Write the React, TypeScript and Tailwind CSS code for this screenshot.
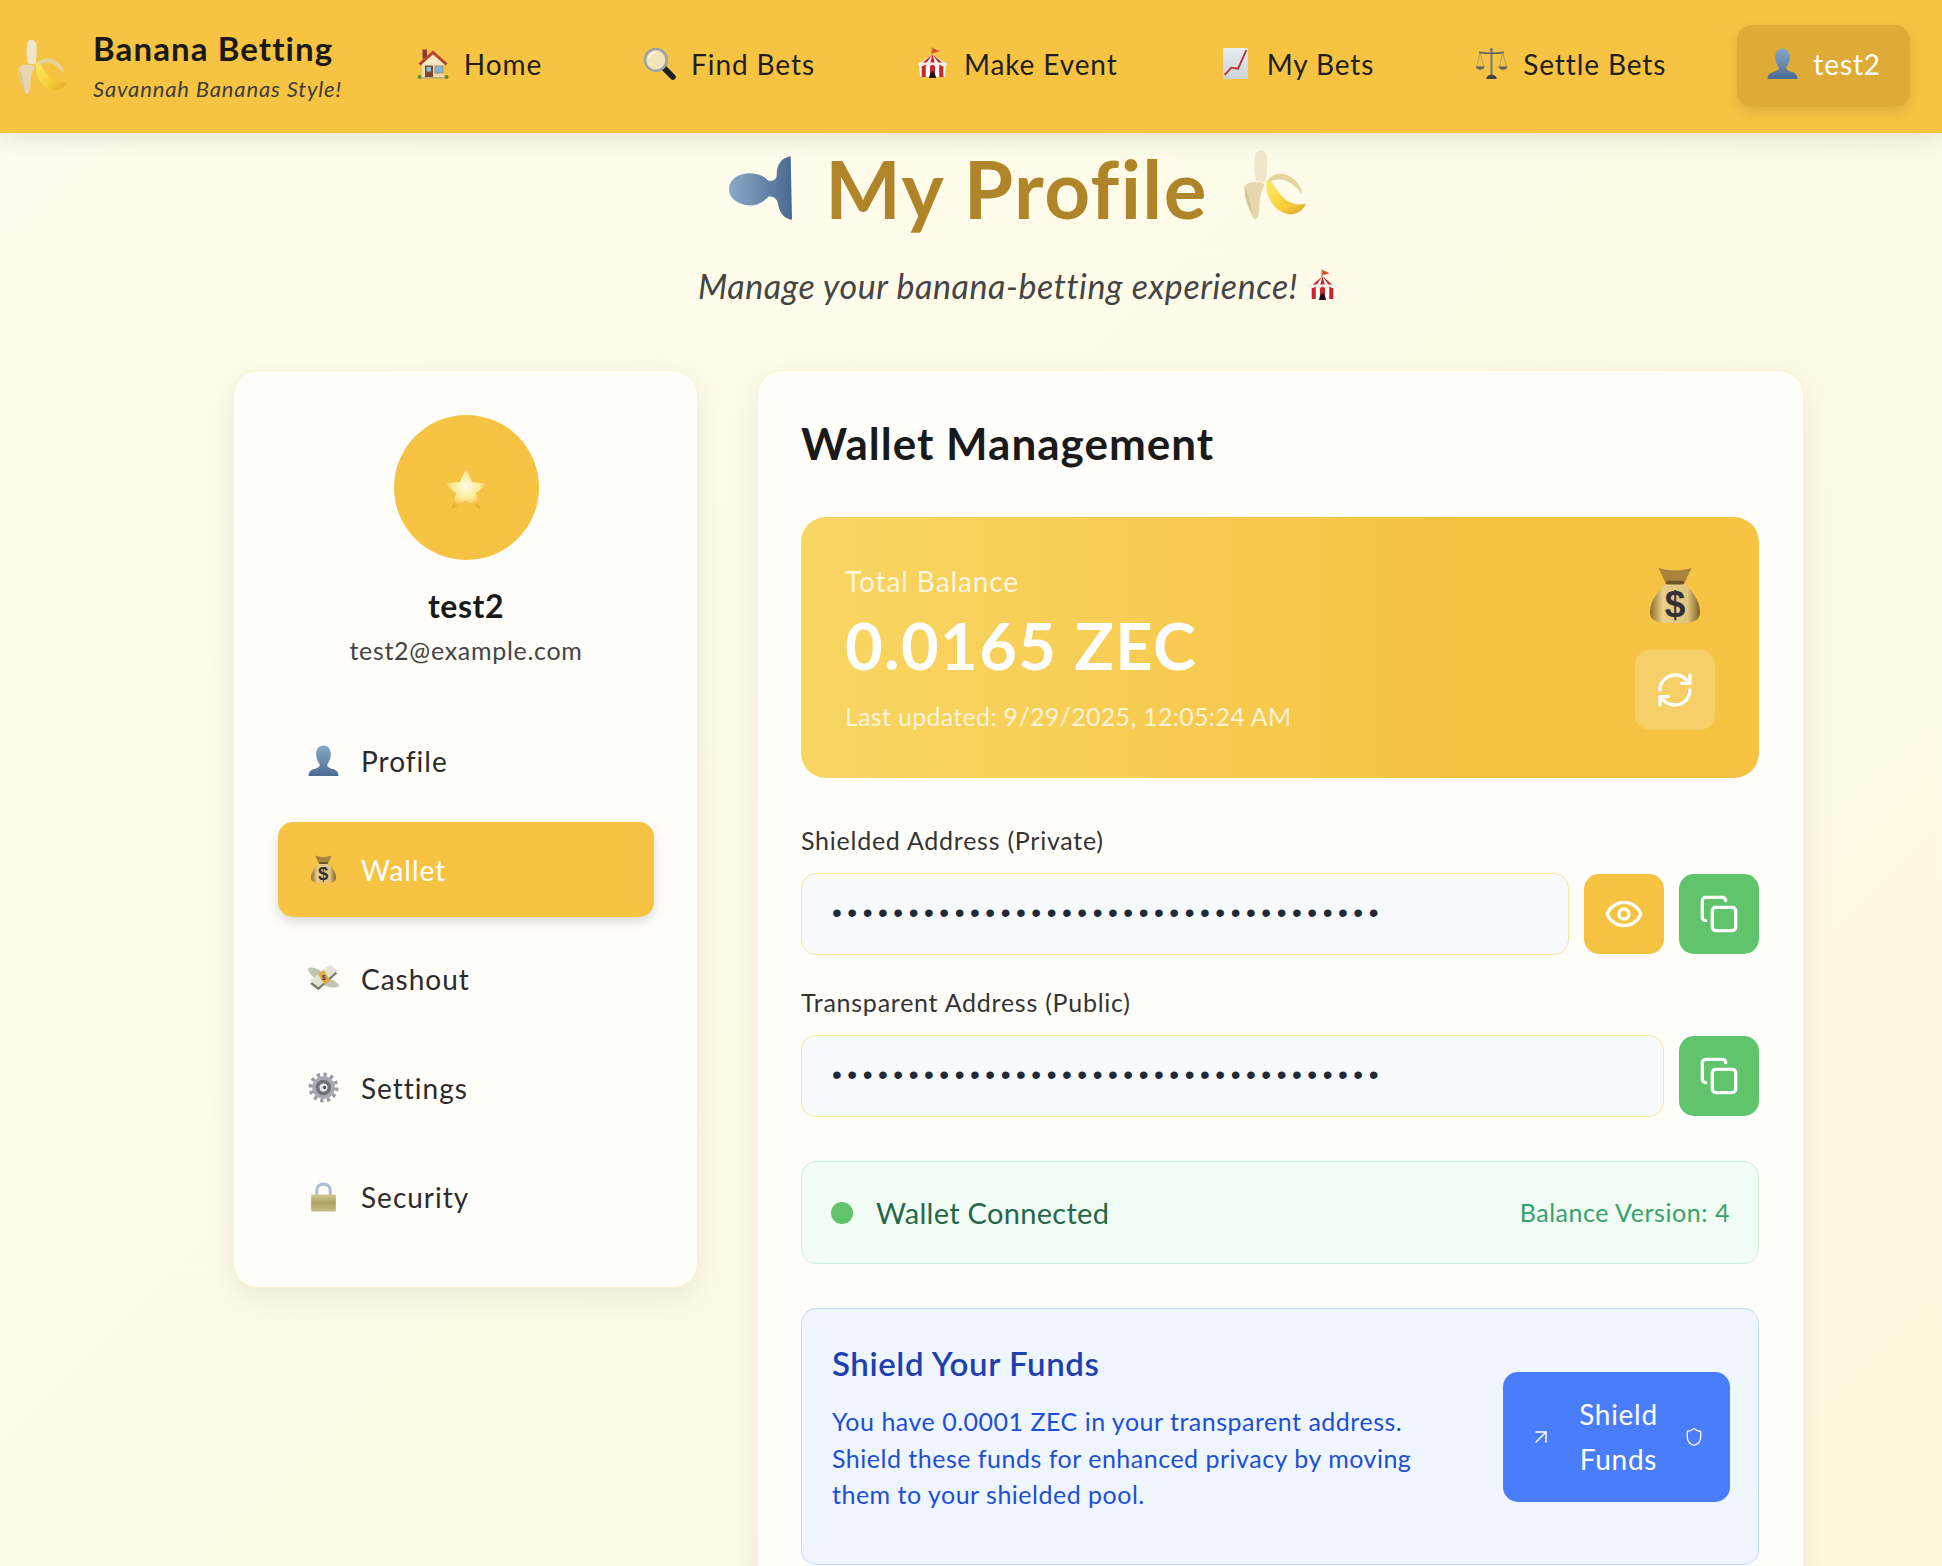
import { ArrowUpRight, Copy, Eye, RefreshCw, Shield } from "lucide-react";

type IconProps = { className?: string };

function BananaIcon({ className }: IconProps) {
  return (
    <svg viewBox="20 20 155 180" className={className}>
      <defs>
        <linearGradient id="bananaFruit" x1="0" y1="0" x2="1" y2="1">
          <stop offset="0" stopColor="#fdea6a" />
          <stop offset="0.6" stopColor="#f7cf38" />
          <stop offset="1" stopColor="#dda62a" />
        </linearGradient>
      </defs>
      <path d="M80 98 C72 130 95 175 135 178 C150 178 165 168 170 153 C150 160 125 150 110 130 C100 118 92 105 88 95 Z" fill="url(#bananaFruit)" />
      <path d="M85 95 C105 75 135 85 150 105 C158 115 162 125 162 132 C150 115 130 98 112 97 C100 96 92 100 85 105 Z" fill="#e6d4a0" />
      <path d="M52 45 C52 30 70 25 78 38 C84 55 78 85 78 103 L55 100 C50 80 50 60 52 45 Z" fill="#efe6cd" />
      <path d="M28 112 C40 100 60 100 75 108 C65 125 62 150 62 170 C60 190 50 195 45 180 C35 160 26 135 28 112 Z" fill="#e6d7ae" />
      <path d="M30 114 C38 135 42 160 48 180 C36 160 27 135 30 114 Z" fill="#cdbb86" opacity="0.6" />
    </svg>
  );
}

function HouseIcon({ className }: IconProps) {
  return (
    <svg viewBox="0 0 64 64" className={className}>
      <rect x="11" y="3" width="9" height="18" fill="#8c3b2e" />
      <path d="M10 27 H54 V58 H10 Z" fill="#f0dcae" />
      <path d="M3 31 L32 5 L61 31 L57 35 L32 13 L7 35 Z" fill="#b73f35" />
      <path d="M32 13 L52 31 V36 H12 V31 Z" fill="#f6e7c2" />
      <rect x="16" y="35" width="16" height="24" fill="#7b4a35" />
      <rect x="19" y="38" width="9" height="9" fill="#8ec0e4" />
      <rect x="36" y="36" width="16" height="14" fill="#7fb7e2" stroke="#a48a62" strokeWidth="2" />
      <circle cx="5" cy="58" r="4" fill="#5c8f3a" />
      <circle cx="59" cy="58" r="4" fill="#5c8f3a" />
      <rect x="8" y="58" width="48" height="3" fill="#b8a98a" />
    </svg>
  );
}

function MagnifierIcon({ className }: IconProps) {
  return (
    <svg viewBox="0 0 64 64" className={className}>
      <path d="M40 40 L58 58" stroke="#1c2026" strokeWidth="11" strokeLinecap="round" />
      <circle cx="25" cy="25" r="21" fill="#f5e5b8" stroke="#9da3a8" strokeWidth="5" />
      <path d="M11 22 C13 14 19 10 26 10" stroke="#fff" strokeWidth="3" fill="none" opacity="0.7" />
    </svg>
  );
}

function TentIcon({ className }: IconProps) {
  return (
    <svg viewBox="0 0 64 64" className={className}>
      <path d="M31 1 V16" stroke="#8a9a4a" strokeWidth="2.5" />
      <path d="M32 2 L46 8 L32 12 Z" fill="#e2482f" />
      <path d="M32 14 L58 32 L56 58 H8 L6 32 Z" fill="#fff" />
      <path d="M32 14 L19 33 V58 H11 V32 Z" fill="#c8272b" />
      <path d="M32 14 L45 33 V58 H53 V32 Z" fill="#c8272b" />
      <path d="M32 14 L27 33 V58 H37 V33 Z" fill="#c8272b" />
      <path d="M3 34 C10 38 14 38 18 34 C23 38 27 38 32 34 C37 38 41 38 46 34 C50 38 55 38 61 34 L58 30 H6 Z" fill="#f3eee6" />
      <path d="M25 60 C27 52 29 48 32 46 C35 48 37 52 39 60 Z" fill="#1c1412" />
    </svg>
  );
}

function ChartIcon({ className }: IconProps) {
  return (
    <svg viewBox="0 0 64 64" className={className}>
      <defs>
        <linearGradient id="chartBg" x1="0" y1="0" x2="0" y2="1">
          <stop offset="0" stopColor="#e8ecf1" />
          <stop offset="1" stopColor="#cdd3da" />
        </linearGradient>
      </defs>
      <rect x="8" y="2" width="48" height="60" fill="url(#chartBg)" />
      <path d="M11 54 L24 40 L37 42 L53 6" stroke="#b3322b" strokeWidth="3.5" fill="none" />
    </svg>
  );
}

function ScalesIcon({ className }: IconProps) {
  return (
    <svg viewBox="0 0 64 64" className={className}>
      <circle cx="32" cy="5" r="3" fill="#73787f" />
      <path d="M32 6 V56" stroke="#73787f" strokeWidth="4" />
      <path d="M8 10 C20 13 44 13 56 10" stroke="#5c6168" strokeWidth="3" fill="none" />
      <path d="M10 11 L3 38 M10 11 L17 38 M54 11 L47 38 M54 11 L61 38" stroke="#7f858c" strokeWidth="1.2" />
      <path d="M1 38 H19 C18 46 3 46 1 38 Z" fill="#5c6168" />
      <path d="M45 38 H63 C62 46 47 46 45 38 Z" fill="#5c6168" />
      <path d="M22 62 C22 56 28 54 32 54 C36 54 42 56 42 62 Z" fill="#3f444a" />
    </svg>
  );
}

function BustIcon({ className }: IconProps) {
  return (
    <svg viewBox="0 0 64 64" className={className}>
      <defs>
        <linearGradient id="bustFill" x1="0" y1="0" x2="0" y2="1">
          <stop offset="0" stopColor="#86a8c8" />
          <stop offset="1" stopColor="#4c6b92" />
        </linearGradient>
      </defs>
      <path
        d="M32 3 C43 3 47 13 46 23 C45 31 42 36 39 40 C40 46 46 47 52 49 C58 51 61 55 61 62 H3 C3 55 6 51 12 49 C18 47 24 46 25 40 C22 36 19 31 18 23 C17 13 21 3 32 3 Z"
        fill="url(#bustFill)"
      />
    </svg>
  );
}

function BustSideIcon({ className }: IconProps) {
  return (
    <svg viewBox="36 46 190 192" className={className}>
      <defs>
        <linearGradient id="bustSide" x1="0" y1="0" x2="1" y2="0">
          <stop offset="0" stopColor="#8aa9c9" />
          <stop offset="1" stopColor="#4a6990" />
        </linearGradient>
      </defs>
      <path
        d="M222 46 C195 50 180 70 180 100 C180 118 170 122 155 120 C140 102 110 95 90 98 C60 100 36 118 36 145 C36 172 60 192 100 195 C125 195 145 180 155 168 C172 166 182 175 185 195 C190 222 205 235 226 238 Z"
        fill="url(#bustSide)"
      />
    </svg>
  );
}

function StarIcon({ className }: IconProps) {
  return (
    <svg viewBox="0 0 64 64" className={className}>
      <defs>
        <radialGradient id="starFill" cx="0.5" cy="0.45" r="0.55">
          <stop offset="0" stopColor="#fffde8" />
          <stop offset="0.55" stopColor="#fdeb94" />
          <stop offset="1" stopColor="#eda92e" />
        </radialGradient>
      </defs>
      <path d="M32 5 L40 24 L62 26 L45 39 L51 60 L32 49 L13 60 L19 39 L2 26 L24 24 Z" fill="url(#starFill)" />
    </svg>
  );
}

function BagIcon({ className }: IconProps) {
  return (
    <svg viewBox="5 2 54 60" className={className}>
      <defs>
        <linearGradient id="bagFill" x1="0" y1="0" x2="1" y2="0">
          <stop offset="0" stopColor="#8f6c2c" />
          <stop offset="0.25" stopColor="#e8cf8c" />
          <stop offset="0.75" stopColor="#e2c47c" />
          <stop offset="1" stopColor="#7d5f26" />
        </linearGradient>
      </defs>
      <path d="M14 2 C24 6 40 6 50 2 L42 19 H22 Z" fill="#a8843f" />
      <path d="M24 18 C14 26 5 38 5 50 C5 59 12 62 32 62 C52 62 59 59 59 50 C59 38 50 26 41 18 Z" fill="url(#bagFill)" />
      <rect x="22" y="16" width="20" height="4" rx="2" fill="#6e5424" />
      <text x="32" y="55" textAnchor="middle" fontSize="40" fontWeight="700" fill="#33303a" fontFamily="'Liberation Sans', sans-serif">
        $
      </text>
    </svg>
  );
}

function MoneyWingsIcon({ className }: IconProps) {
  return (
    <svg viewBox="0 0 64 64" className={className}>
      <path d="M1 13 C10 8 22 12 30 22 L16 32 C9 28 5 21 1 13 Z" fill="#bfc5b2" />
      <path d="M36 34 C44 30 56 36 63 46 C54 52 42 50 32 44 Z" fill="#bfc5b2" />
      <path d="M6 42 L44 12 L59 22 L22 55 Z" fill="#75816a" />
      <path d="M6 36 L44 6 L59 16 L22 49 Z" fill="#dfe5d2" />
      <path d="M21 24 L32 15 L45 36 L34 43 Z" fill="#e3a93a" />
      <text x="33" y="35" textAnchor="middle" fontSize="14" fontWeight="700" fill="#444" fontFamily="'Liberation Sans', sans-serif">
        $
      </text>
    </svg>
  );
}

function GearIcon({ className }: IconProps) {
  return (
    <svg viewBox="0 0 64 64" className={className}>
      <circle cx="32" cy="32" r="24" fill="none" stroke="#9a9ba2" strokeWidth="10" strokeDasharray="6 6.5" />
      <circle cx="32" cy="32" r="22" fill="#a7a8b0" />
      <circle cx="32" cy="32" r="15" fill="#6f7079" />
      <circle cx="32" cy="32" r="8" fill="#e5e6e9" />
      <circle cx="34" cy="32" r="3.5" fill="#55565e" />
    </svg>
  );
}

function LockIcon({ className }: IconProps) {
  return (
    <svg viewBox="0 0 64 64" className={className}>
      <defs>
        <linearGradient id="lockBody" x1="0" y1="0" x2="0" y2="1">
          <stop offset="0" stopColor="#d2ca92" />
          <stop offset="0.5" stopColor="#aca062" />
          <stop offset="1" stopColor="#c8bf84" />
        </linearGradient>
      </defs>
      <path d="M19 30 V20 C19 4 45 4 45 20 V30" stroke="#a9bdd4" strokeWidth="6" fill="none" />
      <rect x="8" y="28" width="48" height="33" rx="2" fill="url(#lockBody)" />
    </svg>
  );
}

function NavLink({ icon, label }: { icon: React.ReactNode; label: string }) {
  return (
    <a className="flex items-center gap-[15px] px-[30px] pb-[5px] text-[28px] tracking-[0.9px] text-[#1f1f1f]">
      {icon}
      <span>{label}</span>
    </a>
  );
}

const menuIcon = "h-[33px] w-[33px] shrink-0";

function MenuItem({ icon, label, active }: { icon: React.ReactNode; label: string; active?: boolean }) {
  return (
    <div
      className={
        active
          ? "flex h-[95px] items-center gap-[21px] rounded-[15px] bg-[#f6c343] pl-[29px] text-[28px] tracking-[1px] text-white shadow-[0_5px_12px_rgba(0,0,0,0.14)]"
          : "flex h-[95px] items-center gap-[21px] rounded-[15px] pl-[29px] text-[28px] tracking-[1px] text-[#2b2b2b]"
      }
    >
      {icon}
      <span>{label}</span>
    </div>
  );
}

const hiddenValue = "zs1qwertyuiopasdfghjklzxcvbnm1234567";

function AddressField({ label, showEye }: { label: string; showEye?: boolean }) {
  return (
    <div>
      <div className="mb-[17px] text-[25px] leading-[32px] tracking-[0.75px] text-[#333]">{label}</div>
      <div className="flex gap-[15px]">
        <input
          type="password"
          readOnly
          value={hiddenValue}
          className="h-[82px] min-w-0 flex-1 rounded-[15px] border border-[#fbe59b] bg-[#f9fafd] px-[30px] pb-[3px] font-['Liberation_Sans',sans-serif] text-[28px] tracking-[5.53px] text-[#1f2937] outline-none"
        />
        {showEye && (
          <button className="mt-[1px] flex h-[80px] w-[80px] items-center justify-center rounded-[15px] bg-[#f6c343] text-white">
            <Eye size={40} strokeWidth={2} />
          </button>
        )}
        <button className="mt-[1px] flex h-[80px] w-[80px] items-center justify-center rounded-[15px] bg-[#5fc46b] text-white">
          <Copy size={40} strokeWidth={2} />
        </button>
      </div>
    </div>
  );
}

export default function App() {
  return (
    <div className="h-[1566px] overflow-hidden bg-[linear-gradient(135deg,#fffdf0_0%,#fff9df_100%)] font-['Lato','Noto_Sans',sans-serif]">
      <header className="relative z-10 flex h-[133px] items-center justify-between bg-[#f6c343] pr-[32px] pl-[16px] shadow-[0_4px_24px_rgba(0,0,0,0.12)]">
        <div className="flex items-center gap-[24px]">
          <BananaIcon className="h-[62px] w-[53px]" />
          <div className="mb-[4px]">
            <div className="text-[33px] leading-[42px] font-bold tracking-[1.1px] text-[#1a1a1a]">Banana Betting</div>
            <div className="mt-[7px] text-[22px] leading-[26px] tracking-[0.85px] text-[#3d3d3d] italic">Savannah Bananas Style!</div>
          </div>
        </div>
        <nav className="mb-[1px] flex items-center gap-[41px]">
          <NavLink icon={<HouseIcon className="h-[32px] w-[32px]" />} label="Home" />
          <NavLink icon={<MagnifierIcon className="h-[33px] w-[33px]" />} label="Find Bets" />
          <NavLink icon={<TentIcon className="h-[33px] w-[33px]" />} label="Make Event" />
          <NavLink icon={<ChartIcon className="h-[33px] w-[33px]" />} label="My Bets" />
          <NavLink icon={<ScalesIcon className="h-[33px] w-[33px]" />} label="Settle Bets" />
          <button className="flex h-[82px] items-center gap-[14px] rounded-[15px] bg-[#deab37] px-[29px] pb-[5px] text-[28px] tracking-[0.9px] text-white shadow-[0_5px_12px_rgba(0,0,0,0.1)]">
            <BustIcon className="h-[33px] w-[33px]" />
            <span>test2</span>
          </button>
        </nav>
      </header>

      <main className="pr-[138px] pl-[233px]">
        <div className="flex h-[88px] items-center justify-center gap-[33px] pt-[22px]">
          <BustSideIcon className="h-[64px] w-[63px]" />
          <h1 className="text-[80px] leading-[88px] font-bold tracking-[1.4px] text-[#b08529]">My Profile</h1>
          <BananaIcon className="mb-[6px] h-[78px] w-[67px]" />
        </div>
        <div className="mt-[42px] mb-[63px] flex h-[44px] items-center justify-center gap-[8px] text-[34px] tracking-[0.58px] text-[#444] italic">
          <span>Manage your banana-betting experience!</span>
          <TentIcon className="h-[33px] w-[33px]" />
        </div>

        <div className="grid grid-cols-[465px_1fr] items-start gap-[59px]">
          <aside className="rounded-[25px] border border-[#fdf3c8] bg-[#fffefa] pt-[44px] pr-[43px] pb-[43px] pl-[44px] shadow-[0_10px_30px_rgba(0,0,0,0.08)]">
            <div className="flex flex-col items-center">
              <div className="flex h-[145px] w-[145px] items-center justify-center rounded-full bg-[#f6c343]">
                <StarIcon className="h-[48px] w-[48px]" />
              </div>
              <div className="mt-[25px] text-[32px] leading-[42px] font-bold tracking-[0.5px] text-[#1a1a1a]">test2</div>
              <div className="mt-[6px] text-[25px] leading-[34px] tracking-[0.7px] text-[#444]">test2@example.com</div>
            </div>
            <div className="mt-[46px] flex flex-col gap-[14px]">
              <MenuItem icon={<BustIcon className={menuIcon} />} label="Profile" />
              <MenuItem icon={<BagIcon className="mx-[4px] h-[31px] w-[25px] shrink-0" />} label="Wallet" active />
              <MenuItem icon={<MoneyWingsIcon className={menuIcon} />} label="Cashout" />
              <MenuItem icon={<GearIcon className={menuIcon} />} label="Settings" />
              <MenuItem icon={<LockIcon className={menuIcon} />} label="Security" />
            </div>
          </aside>

          <section className="h-[1300px] rounded-[25px] border border-[#fdf3c8] bg-[#fffefa] pt-[43px] pr-[44px] pl-[43px] shadow-[0_10px_30px_rgba(0,0,0,0.08)]">
            <h2 className="text-[44px] leading-[58px] font-bold tracking-[1px] text-[#1a1a1a]">Wallet Management</h2>

            <div className="mt-[45px] flex h-[261px] items-center justify-between rounded-[25px] bg-[linear-gradient(90deg,#f8d663_0%,#f6c343_70%)] px-[44px]">
              <div className="text-white">
                <div className="text-[28px] leading-[36px] tracking-[0.9px] opacity-80">Total Balance</div>
                <div className="mt-[4px] text-[65px] leading-[84px] font-bold tracking-[1.4px]">0.0165 ZEC</div>
                <div className="mt-[12px] text-[25px] leading-[34px] tracking-[0.3px] opacity-75">Last updated: 9/29/2025, 12:05:24 AM</div>
              </div>
              <div className="flex flex-col items-center gap-[24px]">
                <BagIcon className="h-[61px] w-[50px]" />
                <button className="flex h-[80px] w-[80px] items-center justify-center rounded-[15px] bg-white/20 text-white">
                  <RefreshCw size={40} strokeWidth={2} />
                </button>
              </div>
            </div>

            <div className="mt-[46px] flex flex-col gap-[31px]">
              <AddressField label="Shielded Address (Private)" showEye />
              <AddressField label="Transparent Address (Public)" />
            </div>

            <div className="mt-[44px] flex h-[103px] items-center justify-between rounded-[15px] border border-[#c6f0d4] bg-[#f1fdf5] pr-[28px] pl-[29px]">
              <div className="flex items-center gap-[23px]">
                <span className="h-[22px] w-[22px] rounded-full bg-[#5fc46b]" />
                <span className="text-[29px] tracking-[0.3px] text-[#276749]">Wallet Connected</span>
              </div>
              <span className="text-[25px] tracking-[0.55px] text-[#38a169]">Balance Version: 4</span>
            </div>

            <div className="mt-[44px] flex h-[257px] items-center justify-between rounded-[15px] border border-[#bfdbfe] bg-[#eff6ff] pr-[28px] pl-[30px]">
              <div className="mb-[18px] w-[640px]">
                <h3 className="text-[33px] leading-[42px] font-semibold tracking-[0.6px] text-[#1e40af]">Shield Your Funds</h3>
                <p className="mt-[19px] w-[610px] text-[25px] leading-[36.5px] tracking-[0.5px] text-[#1d4ed8]">
                  You have 0.0001 ZEC in your transparent address. Shield these funds for enhanced privacy by moving them to your shielded pool.
                </p>
              </div>
              <button className="flex h-[130px] w-[227px] items-center justify-between rounded-[15px] bg-[#4a7dfb] px-[26px] text-[28px] leading-[45px] tracking-[0.7px] text-white">
                <ArrowUpRight size={24} strokeWidth={1.5} />
                <span className="w-[90px] text-center">Shield Funds</span>
                <Shield size={20} strokeWidth={1.5} />
              </button>
            </div>
          </section>
        </div>
      </main>
    </div>
  );
}
